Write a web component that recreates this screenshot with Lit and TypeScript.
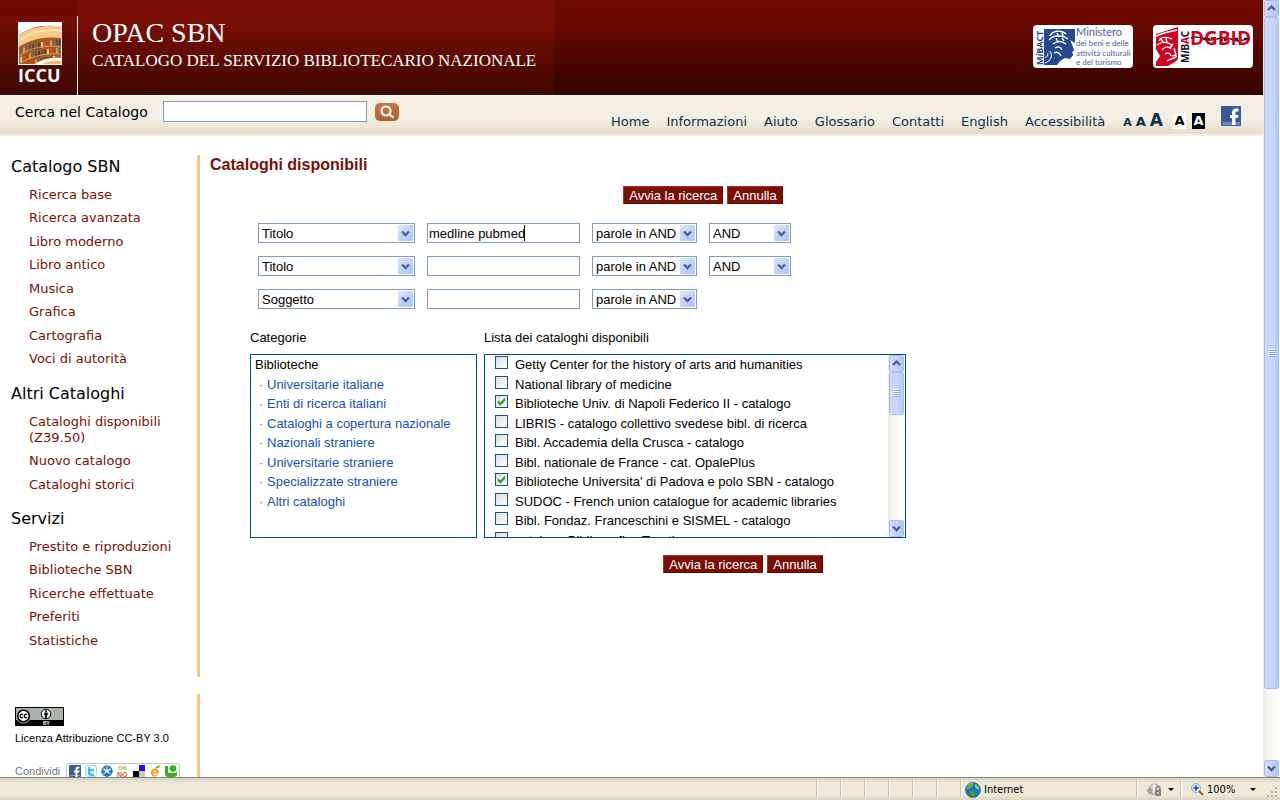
import { LitElement, html, css, svg, nothing } from "lit";
import { customElement, property } from "lit/decorators.js";

const chevron = (up: boolean) => html`<svg width="9" height="7" viewBox="0 0 9 7" aria-hidden="true">
  <path d=${up ? "M1 5 4.500 1.500 8 5" : "M1 1.500 4.500 5 8 1.500"} fill="none" stroke="#4d6185" stroke-width="2.300" />
</svg>`;

@customElement("xp-scrollbar")
export class XpScrollbar extends LitElement {
  /** Share of the track taken by the thumb, in percent. */
  @property({ type: Number }) thumb = 50;

  static styles = css`
    :host { display: flex; flex-direction: column; width: 17px; flex: none; background: linear-gradient(90deg, #ece9e2, #f7f6f2 30%, #fefefb); }
    button, .thumb {
      box-sizing: border-box; width: 15px; margin: 0 1px; padding: 0;
      border: 1px solid #fff; border-radius: 2px; outline: 1px solid #a9bfea; outline-offset: -1px;
      background: linear-gradient(90deg, #cfdcfd, #c3d3fd 50%, #aec6f8);
      display: flex; align-items: center; justify-content: center;
    }
    button { height: 17px; flex: none; }
    .track { flex: 1; min-height: 0; }
    .thumb { background: linear-gradient(90deg, #c9d8fc, #c8d6fb 60%, #b2c9f9); }
  `;

  render() {
    return html`
      <button type="button" aria-label="Su">${chevron(true)}</button>
      <div class="track">
        <div class="thumb" style="height:${this.thumb}%">
          <svg width="7" height="8" viewBox="0 0 7 8" aria-hidden="true">
            <path d="M0 .5h6M0 2.500h6M0 4.500h6M0 6.500h6" stroke="#eef4fe" />
            <path d="M1 1.500h6M1 3.500h6M1 5.500h6M1 7.500h6" stroke="#8cb0f8" />
          </svg>
        </div>
      </div>
      <button type="button" aria-label="Giù">${chevron(false)}</button>
    `;
  }
}

const menu = [
  { title: "Catalogo SBN", items: ["Ricerca base", "Ricerca avanzata", "Libro moderno", "Libro antico", "Musica", "Grafica", "Cartografia", "Voci di autorità"] },
  { title: "Altri Cataloghi", items: ["Cataloghi disponibili (Z39.50)", "Nuovo catalogo", "Cataloghi storici"] },
  { title: "Servizi", items: ["Prestito e riproduzioni", "Biblioteche SBN", "Ricerche effettuate", "Preferiti", "Statistiche"] },
];

const nav = ["Home", "Informazioni", "Aiuto", "Glossario", "Contatti", "English", "Accessibilità"];

const queries = [
  { field: "Titolo", value: "medline pubmed", join: true, caret: true },
  { field: "Titolo", value: "", join: true, caret: false },
  { field: "Soggetto", value: "", join: false, caret: false },
];

const categories = ["Universitarie italiane", "Enti di ricerca italiani", "Cataloghi a copertura nazionale", "Nazionali straniere", "Universitarie straniere", "Specializzate straniere", "Altri cataloghi"];

const catalogs: [string, boolean][] = [
  ["Getty Center for the history of arts and humanities", false],
  ["National library of medicine", false],
  ["Biblioteche Univ. di Napoli Federico II - catalogo", true],
  ["LIBRIS - catalogo collettivo svedese bibl. di ricerca", false],
  ["Bibl. Accademia della Crusca - catalogo", false],
  ["Bibl. nationale de France - cat. OpalePlus", false],
  ["Biblioteche Universita' di Padova e polo SBN - catalogo", true],
  ["SUDOC - French union catalogue for academic libraries", false],
  ["Bibl. Fondaz. Franceschini e SISMEL - catalogo", false],
  ["catalogo Bibliografico Trentino", false],
];

const bookColors = ["#b5452c", "#2f6f6a", "#d9a24a", "#8c2f22", "#4f7f54", "#e0c48a", "#3a5a86", "#c4572f", "#6b3a1e"];

const iccuLogo = html`<svg width="44" height="43" viewBox="0 0 44 43" role="img" aria-label="ICCU">
  <rect width="44" height="43" fill="#fff" />
  <path d="M1 13C12 5 26 2 43 5V38C34 36 26 38 20 42H1Z" fill="#a85a24" />
  <path d="M1 13C12 5 28 3 43 4.500V16C28 14 12 17 1 25Z" fill="#f6c988" />
  <path d="M3 18C14 9 28 7 43 8.500" stroke="#fbe3ba" fill="none" stroke-width="2" />
  ${[0, 1, 2].map((r) =>
    Array.from({ length: 14 }, (_, i) => {
      const x = 2 + i * 3;
      const y = 27 - i * 1.3 + i * i * 0.045 + r * 8;
      return y > 38 ? nothing : svg`<rect x=${x} y=${y} width="2" height="5.500" fill=${bookColors[(i * 2 + r * 5) % 9]} />`;
    })
  )}
  <path d="M1 34C12 25 28 23 43 25M1 42C12 34 28 31 43 32" stroke="#e09a50" fill="none" stroke-width="1" />
  <path d="M17 42C24 37 34 35 43 36V42Z" fill="#fff" />
  <path d="M24 42C29 39.500 36 38 43 39V42Z" fill="#f4b765" />
  <rect x=".5" y=".5" width="43" height="42" fill="none" stroke="#fff" />
</svg>`;

const mibactLogo = html`<svg width="100" height="43" viewBox="0 0 100 43" role="img" aria-label="MiBACT">
  <rect width="100" height="43" rx="4" fill="#fff" />
  <text class="brand" transform="translate(10 40) rotate(-90)" font-size="9" fill="#27478f">M<tspan font-style="italic">i</tspan>BACT</text>
  <rect x="11" y="4" width="31" height="36" fill="#27478f" />
  <path d="M37 15 41 25 39 27 40 30 37 34 32 33 27 36 24 40H42V18Z" fill="#fff" />
  <path d="M37 15 41 25 39 27 40 30 37 33 34 32 33 28 36 26 34 22Z" fill="#27478f" />
  <path d="M17 11C19 6 28 4 33 9M16 15C21 9 30 10 35 14M20 19C24 16 29 16 33 19M22 23C25 21 28 22 29 25M21 28C24 26 27 28 28 31M24 8l2 4M29 7l1 4M23 13l2 4M29 13l2 3" stroke="#fff" stroke-width="1.400" fill="none" />
  <path d="M12 38C18 36 20 31 17 26M12 33C14 32 15 30 15 28" stroke="#fff" stroke-width="1" fill="none" />
  <g class="lato" fill="#4a62a0">
    <text x="43" y="11" font-size="11">Ministero</text>
    <text x="43" y="21" font-size="8">dei beni e delle</text>
    <text x="43" y="31" font-size="8">attività culturali</text>
    <text x="43" y="40" font-size="8">e del turismo</text>
  </g>
</svg>`;

const dgbidLogo = html`<svg width="100" height="43" viewBox="0 0 100 43" role="img" aria-label="DGBID">
  <rect width="100" height="43" rx="4" fill="#fff" />
  <path d="M3 9 25 2V34L22 37 15 41H3V37L7 31 3 24Z" fill="#d4001f" />
  <path d="M3 11 11 8 24 5M6 16C9 11 15 12 19 14M4 20C9 16 15 17 19 20M9 25C12 21 16 21 18 24M12 29C15 27 17 28 18 31M14 36C17 33 20 35 24 31M7 13l4 5M13 13l1 5M20 19l-3 4M21 23l2 7-4 1" stroke="#fff" stroke-width="1.400" fill="none" />
  <text class="brand" transform="translate(36 38) rotate(-90)" font-size="10" fill="#111">M<tspan font-style="italic">i</tspan>B<tspan fill="#d4001f">A</tspan>C</text>
  <path d="M38 13C45 10 50 14 56 15S70 10 78 14 90 15 96 13" stroke="#222" stroke-width="1.500" fill="none" />
  <text class="dg" x="37" y="20" font-size="19" fill="#d4001f">DGBID</text>
  <path d="M50 14h7M67 15h6M82 14h4M91 14h5" stroke="#222" stroke-width="2.500" stroke-dasharray="3 1" />
</svg>`;

const fb = (size: number) => html`<svg width=${size} height=${size} viewBox="0 0 20 20" aria-hidden="true">
  <rect width="20" height="20" rx="1" fill="#3b5998" />
  <path d="M1 16h18v3H1z" fill="#6d84b4" />
  <path d="M11 19v-7H9V9h2V7c0-3 1.500-4.500 4-4.500h2.500v3H16c-1 0-1.500.5-1.500 1.500v2H17.500l-.5 3h-2.500v7z" fill="#fff" />
</svg>`;

const ccBadge = html`<svg width="49" height="19" viewBox="0 0 49 19" role="img" aria-label="Creative Commons BY">
  <rect width="49" height="19" fill="#000" />
  <rect x="1" y="1" width="47" height="12" fill="#aab2ab" />
  <circle cx="8.500" cy="9" r="7.500" fill="#aab2ab" />
  <circle cx="8.500" cy="9" r="5.800" fill="#fff" stroke="#000" stroke-width="1.600" />
  <path d="M7.800 7.700A1.700 1.700 0 1 0 7.800 10.300M12 7.700A1.700 1.700 0 1 0 12 10.300" fill="none" stroke="#000" stroke-width="1.300" />
  <circle cx="31" cy="7" r="4.700" fill="#fff" stroke="#000" />
  <circle cx="31" cy="4.200" r="1" />
  <path d="M29.300 5.500h3.400v2.800h-.8v2.600h-1.800V8.300h-.8z" />
  <text class="by" x="28" y="18" font-size="5" fill="#fff">BY</text>
</svg>`;

const shareIcons = [
  { name: "Facebook", art: svg`<rect width="12" height="12" rx="1" fill="#3b5998"/><path d="M1 10h10v1H1z" fill="#8a9cc7"/><path d="M6.500 12V7.500H5V5.500h1.500V4.200C6.500 2.500 7.500 1.800 9 1.800h1.500v1.800h-1c-.7 0-1 .3-1 1v.9h2L10.200 7.500H8.500V12z" fill="#fff"/>` },
  { name: "Twitter", art: svg`<rect x=".5" y=".5" width="11" height="11" rx="2" fill="#e8f8fd" stroke="#9adcf2"/><path d="M4 2v5.500C4 9 5 10 6.500 10H9M4 5h5" stroke="#2fc0ee" stroke-width="2.200" fill="none"/>` },
  { name: "Wikio", art: svg`<path d="M3.500 1 6 .2 8.500 1 11 3.500 11.800 7 10 10.500 6 12 2 10.500 .2 7 1 3.500Z" fill="#1e74b8"/><circle cx="6" cy="6" r="2" fill="#fff"/><path d="M6 1v4M2 9.500 5 7M10 9.500 7 7" stroke="#8cc8ee" stroke-width="1.500"/><circle cx="3.200" cy="4.500" r="1" fill="#fff"/><circle cx="8.800" cy="4.500" r="1" fill="#fff"/>` },
  { name: "OKNOtizie", art: svg`<text class="by" x="1" y="5" font-size="6" fill="#97c13a">OK</text><text class="by" x="0" y="12" font-size="7" fill="#ee5523">NO</text>` },
  { name: "Delicious", art: svg`<rect width="12" height="12" fill="#fff"/><rect x="6" width="6" height="6" fill="#1c14ff"/><rect y="6" width="6" height="6" fill="#000"/><rect x="6" y="6" width="6" height="6" fill="#c9c9c9"/>` },
  { name: "Segnalo", art: svg`<path d="M5.500 3.500a4 4 0 1 0 3.800 6H7.500a2 2 0 0 1-3.500-1h6C10 5 8 3.500 5.500 3.500Z" fill="#f79a0e"/><path d="M4 7.200h3.500A1.700 1.700 0 0 0 4 7.200Z" fill="#fff"/><path d="M6 3.500C7 1 9 .2 11.500 .5 11 2.500 9 3.500 6 3.500Z" fill="#55b52c"/>` },
  { name: "Technorati", art: svg`<path d="M0 1h3v6h9v3.500L10 12H2L0 10Z" fill="#35b318"/><circle cx="8" cy="3.600" r="3.300" fill="#35b318"/><path d="M3 7.400h8" stroke="#fff"/>` },
];

const globe = html`<svg width="16" height="16" viewBox="0 0 16 16" aria-hidden="true">
  <circle cx="8" cy="8" r="7.500" fill="#2a6fc4" />
  <path d="M2 4C4 1 7 1 8 2L7 5 4 7 2 8Z" fill="#4fc03a" />
  <path d="M10 2c3 1 4 3 4.500 6L12 7 10 5Z" fill="#7fdd4e" />
  <path d="M5 9l4 0 2 3-3 3-3-2Z" fill="#37a62c" />
  <path d="M3 3c2-2 4-2 5-1" stroke="#cfe8ff" fill="none" />
  <circle cx="8" cy="8" r="7.400" fill="none" stroke="#1d4f86" stroke-width=".8" />
</svg>`;

const privacyIcon = html`<svg width="16" height="14" viewBox="0 0 16 14" aria-hidden="true">
  <path d="M3 5a6 6 0 0 1 11-1v7H6Z" fill="#d8d8d4" stroke="#9a9a96" stroke-width=".7" />
  <path d="M0 8 4 4 8 8 5 8 8 12 3 11 1 8Z" fill="#a0a0a0" />
  <path d="M8 1.500v7" stroke="#fff" stroke-width="1.500" />
  <rect x="9" y="7" width="6" height="6" fill="#858585" />
  <path d="M10 7V5.500a2 2 0 0 1 4 0V7" fill="none" stroke="#858585" stroke-width="1.300" />
  <path d="M12 9v2" stroke="#fff" />
</svg>`;

const zoomIcon = html`<svg width="13" height="13" viewBox="0 0 13 13" aria-hidden="true">
  <path d="M7.500 7.500 12 12" stroke="#b5632a" stroke-width="2.400" />
  <circle cx="5" cy="5" r="4.400" fill="#e3f1fc" stroke="#7f9fc0" />
  <path d="M5 2.500v5M2.500 5h5" stroke="#1461c4" stroke-width="2" />
</svg>`;

@customElement("app-root")
export class AppRoot extends LitElement {
  static styles = css`
    :host { display: flex; flex-direction: column; height: 100vh; overflow: hidden; background: #fff; color: #000; font: 13px/16px "Liberation Sans", Arial, sans-serif; }
    * { box-sizing: border-box; }
    svg { display: block; flex: none; }
    a { text-decoration: none; color: inherit; }
    ul, h1, h2, p { margin: 0; padding: 0; list-style: none; font-weight: normal; }
    .brand { font-family: "Noto Sans", sans-serif; font-weight: 700; }
    .dg { font-family: "Open Sans", sans-serif; font-weight: 700; }
    .lato { font-family: "Lato", sans-serif; }
    .by { font-family: "Liberation Sans", sans-serif; font-weight: 700; }

    .window { flex: 1; min-height: 0; display: flex; }
    .page { flex: 1; min-width: 0; overflow: hidden; }

    .header { display: flex; height: 95px; background: linear-gradient(#6e0b02, #690901 25%, #330400); }
    .iccu { width: 78px; padding-top: 16px; }
    .iccu-box { height: 79px; padding: 6px 0 0 18px; border-right: 1px solid #fff; background: linear-gradient(#760f05, #3f0602); }
    .iccu-name { font: 700 18px/20px "Open Sans", sans-serif; color: #fff; }
    .titles { width: 476px; padding: 17px 0 0 14px; white-space: nowrap; color: #fff; background: linear-gradient(#7a0f04, #780f05 25%, #3f0602); font-family: "Liberation Serif", serif; }
    .titles p:first-child { font-size: 28px; line-height: 32px; }
    .titles p:last-child { font-size: 17px; line-height: 24px; }
    .partners { margin-left: auto; padding: 25px 10px 0 0; display: flex; gap: 20px; }

    .bar { display: flex; height: 40px; margin-top: 1px; padding: 0 22px 0 15px; border-bottom: 2px solid #f4f0e6; background: linear-gradient(#f4efe5 60%, #e5dcc9); font-family: "DejaVu Sans", Verdana, sans-serif; }
    .search { display: flex; align-items: flex-start; padding-top: 5px; font-size: 14px; line-height: 22px; }
    .search label { width: 148px; }
    .search input { width: 204px; height: 21px; }
    .search button { margin: 2px 0 0 8px; width: 24px; height: 18px; padding: 0; border: 0; border-radius: 5px; background: linear-gradient(#c9784a, #b0602f); display: grid; place-items: center; }
    input[type="text"] { border: 1px solid #7f9db9; background: #fff; padding: 0 1px; margin: 0; font: 13px/16px "Liberation Sans", Arial, sans-serif; color: #000; border-radius: 0; outline: none; }
    .nav { margin-left: auto; padding-top: 18px; display: flex; gap: 17px; color: #0b2f4d; line-height: 16px; }
    .tools { display: flex; align-items: flex-start; margin-left: 18px; padding-top: 10px; }
    .sizes { display: flex; gap: 4px; align-items: baseline; font-weight: 700; color: #0b2f4d; padding-top: 4px; line-height: 20px; }
    .s1 { font-size: 11px; } .s2 { font-size: 13px; } .s3 { font-size: 17px; }
    .contrast { display: flex; gap: 6px; padding: 7px 16px 0 10px; font: 700 13px/16px "DejaVu Sans", sans-serif; }
    .contrast a { width: 13px; height: 16px; text-align: center; background: #fff; color: #000; }
    .contrast a:last-child { background: #000; color: #fff; }

    .body { display: flex; padding-top: 19px; }
    .side { width: 200px; flex: none; font-family: "DejaVu Sans", Verdana, sans-serif; }
    .menu { height: 522px; border-right: 3px solid #f0c68c; }
    .menu h2 { font-size: 16px; line-height: 24px; padding-left: 11px; }
    .menu ul { margin: 5px 0 10px; padding-left: 29px; }
    .menu li { color: #7a0f05; line-height: 16px; padding: 3px 20px 4px 0; }
    .menu li:nth-child(even) { padding-bottom: 5px; }
    .foot { margin-top: 17px; height: 120px; padding: 13px 0 0 15px; border-right: 3px solid #f0c68c; font-family: "Liberation Sans", Arial, sans-serif; }
    .licence { font-size: 11px; line-height: 14px; padding-top: 5px; }
    .share { display: flex; padding-top: 18px; font-size: 11px; line-height: 17px; color: #777; }
    .icons { display: flex; gap: 4px; margin-left: auto; margin-right: 17px; height: 18px; padding: 1px 2px; border: 1px solid #c4c4c4; border-radius: 3px; }
    .icons a { display: block; }

    .main { flex: 1; min-width: 0; padding: 0 67px 0 10px; }
    .main h1 { font-size: 16px; line-height: 20px; font-weight: 700; color: #7a0f05; }
    .actions { display: flex; justify-content: center; gap: 4px; margin-top: 11px; }
    .actions.low { padding-left: 80px; margin-top: 17px; }
    .actions button { height: 18px; padding: 1px 5px 0; border: 1px solid; border-color: #b5301a #5d0a02 #5d0a02 #b5301a; background: #7a0f05; color: #fff; font: 13px/15px "Liberation Sans", Arial, sans-serif; }
    .query { display: grid; grid-template-columns: 157px 153px 105px 82px; column-gap: 12px; row-gap: 13px; margin: 19px 0 0 48px; }
    .pick, .entry { position: relative; display: grid; }
    .pick select { appearance: none; height: 20px; width: 100%; margin: 0; padding: 1px 3px 0; border: 1px solid #7f9db9; border-radius: 0; background: #fff; color: #000; font: 13px/17px "Liberation Sans", Arial, sans-serif; }
    .pick span { position: absolute; top: 2px; right: 2px; width: 15px; height: 16px; display: grid; place-items: center; pointer-events: none; border-radius: 1px; background: linear-gradient(135deg, #dbe5fd, #bccffb 60%, #adc8f8); }
    .entry input { height: 20px; width: 100%; }
    .caret { position: absolute; left: 97px; top: 2px; width: 1px; height: 16px; background: #000; }
    .lists { display: grid; grid-template-columns: 227px 422px; column-gap: 7px; row-gap: 8px; margin: 21px 0 0 40px; }
    .panel { height: 184px; border: 1px solid #004a94; }
    .cats { padding: 2px 4px; }
    .cats li { padding: 0 0 3px 12px; color: #1451b8; }
    .cats p { padding-bottom: 4px; }
    .cats li:nth-child(even) { padding-bottom: 4px; }
    .cats li::before { content: "·"; color: #a0641e; display: inline-block; width: 8px; margin-left: -8px; }
    .catalogs { display: flex; }
    .catalogs ul { flex: 1; overflow: hidden; padding: 1px 0 0 10px; }
    .catalogs li { display: flex; align-items: flex-start; padding-bottom: 3px; }
    .catalogs li:nth-child(odd) { padding-bottom: 4px; }
    .catalogs label { padding: 1px 0 0 7px; line-height: 15px; }
    .catalogs input { appearance: none; display: grid; place-items: center; width: 13px; height: 13px; margin: 0; flex: none; border: 1px solid #1c5180; background: linear-gradient(135deg, #dcdcd7, #fff); }
    .catalogs input:checked::before { content: ""; width: 9px; height: 9px; background: #21a121; clip-path: polygon(10% 35%, 38% 60%, 90% 5%, 90% 42%, 38% 95%, 10% 70%); }

    .status { display: flex; flex: none; height: 23px; border-top: 1px solid #8a877a; background: linear-gradient(#d6d2c0, #ece9d8 5px, #ece9d8 17px, #d9d5c3); font: 11px/16px "DejaVu Sans Condensed", Tahoma, sans-serif; align-items: stretch; padding: 3px 0 2px; }
    .cell { width: 24px; border-left: 1px solid #c5c2b2; box-shadow: inset 1px 0 #fff; display: flex; align-items: center; padding-left: 4px; gap: 3px; }
    .cell:first-child { margin-left: auto; }
    .zone { width: 176px; } .privacy { width: 44px; padding-left: 9px; gap: 6px; } .zoom { width: 86px; padding-left: 10px; }
    .zoom i { margin-left: 12px; }
    .cell i { border: 3px solid transparent; border-top-color: #000; border-bottom: 0; }
    .grip { align-self: flex-end; width: 14px; }
  `;

  private pick(label: string, value: string) {
    return html`<div class="pick">
      <select aria-label=${label}><option>${value}</option></select>
      <span>${chevron(false)}</span>
    </div>`;
  }

  private actions(extra = "") {
    return html`<div class="actions ${extra}">
      <button type="button">Avvia la ricerca</button>
      <button type="button">Annulla</button>
    </div>`;
  }

  render() {
    return html`
      <div class="window">
        <div class="page">
          <header class="header">
            <div class="iccu"><div class="iccu-box">${iccuLogo}<div class="iccu-name">ICCU</div></div></div>
            <div class="titles"><p>OPAC SBN</p><p>CATALOGO DEL SERVIZIO BIBLIOTECARIO NAZIONALE</p></div>
            <div class="partners"><a href="#">${mibactLogo}</a><a href="#">${dgbidLogo}</a></div>
          </header>

          <div class="bar">
            <form class="search">
              <label for="q">Cerca nel Catalogo</label>
              <input id="q" type="text" />
              <button type="button" aria-label="Cerca">
                <svg width="16" height="14" viewBox="0 0 16 14"><circle cx="7" cy="6" r="4.500" fill="none" stroke="#fff" stroke-width="2.200" /><path d="M10.500 9.500 14.500 12.500" stroke="#f6e3d6" stroke-width="2.200" /></svg>
              </button>
            </form>
            <nav class="nav">${nav.map((n) => html`<a href="#">${n}</a>`)}</nav>
            <div class="tools">
              <div class="sizes"><a class="s1" href="#">A</a><a class="s2" href="#">A</a><a class="s3" href="#">A</a></div>
              <div class="contrast"><a href="#">A</a><a href="#">A</a></div>
              <a href="#" aria-label="Facebook">${fb(20)}</a>
            </div>
          </div>

          <div class="body">
            <aside class="side">
              <nav class="menu">
                ${menu.map((g) => html`<h2>${g.title}</h2><ul>${g.items.map((i) => html`<li><a href="#">${i}</a></li>`)}</ul>`)}
              </nav>
              <div class="foot">
                <a href="#">${ccBadge}</a>
                <p class="licence">Licenza Attribuzione CC-BY 3.0</p>
                <div class="share">
                  <span>Condividi</span>
                  <div class="icons">
                    ${shareIcons.map((s) => html`<a href="#" aria-label=${s.name}><svg width="12" height="14" viewBox="0 0 12 14">${s.art}</svg></a>`)}
                  </div>
                </div>
              </div>
            </aside>

            <main class="main">
              <h1>Cataloghi disponibili</h1>
              ${this.actions()}
              <div class="query">
                ${queries.map((q) => html`
                  ${this.pick("Campo", q.field)}
                  <div class="entry"><input type="text" aria-label="Termine" .value=${q.value} />${q.caret ? html`<span class="caret"></span>` : nothing}</div>
                  ${this.pick("Modo", "parole in AND")}
                  ${q.join ? this.pick("Operatore", "AND") : html`<span></span>`}
                `)}
              </div>
              <div class="lists">
                <p>Categorie</p>
                <p>Lista dei cataloghi disponibili</p>
                <div class="panel cats">
                  <p>Biblioteche</p>
                  <ul>${categories.map((c) => html`<li><a href="#">${c}</a></li>`)}</ul>
                </div>
                <div class="panel catalogs">
                  <ul>
                    ${catalogs.map(([name, on], i) => html`<li><input type="checkbox" id="c${i}" .checked=${on} /><label for="c${i}">${name}</label></li>`)}
                  </ul>
                  <xp-scrollbar .thumb=${29}></xp-scrollbar>
                </div>
              </div>
              ${this.actions("low")}
            </main>
          </div>
        </div>
        <xp-scrollbar .thumb=${90.4}></xp-scrollbar>
      </div>

      <footer class="status">
        ${[0, 1, 2, 3, 4, 5].map(() => html`<div class="cell"></div>`)}
        <div class="cell zone">${globe}<span>Internet</span></div>
        <div class="cell privacy">${privacyIcon}<i></i></div>
        <div class="cell zoom">${zoomIcon}<span>100%</span><i></i></div>
        <svg class="grip" width="14" height="12" viewBox="0 0 14 12" aria-hidden="true">
          <path d="M9 1h2v2h-2zM5 5h2v2h-2zM9 5h2v2h-2zM1 9h2v2h-2zM5 9h2v2h-2zM9 9h2v2h-2z" fill="#b8b4a2" />
        </svg>
      </footer>
    `;
  }
}
